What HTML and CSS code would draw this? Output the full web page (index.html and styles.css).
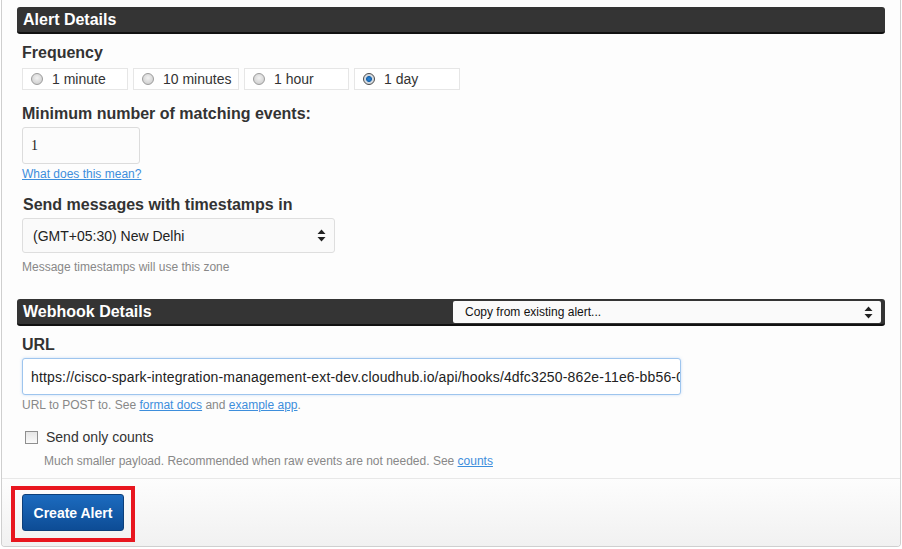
FILE: index.html
```html
<!DOCTYPE html>
<html>
<head>
<meta charset="utf-8">
<link rel="stylesheet" href="styles.css">
</head>
<body>
<div class="panel">
  <div class="body">
    <div class="bar"><span class="bar-title">Alert Details</span></div>
    <div class="field">
      <div class="label label-freq">Frequency</div>
      <div class="radios">
        <label class="radio"><span class="dot"></span>1 minute</label>
        <label class="radio"><span class="dot"></span>10 minutes</label>
        <label class="radio"><span class="dot"></span>1 hour</label>
        <label class="radio"><span class="dot on"></span>1 day</label>
      </div>
    </div>
    <div class="field">
      <div class="label label-min">Minimum number of matching events:</div>
      <div class="input small">1</div>
      <a class="link help-link">What does this mean?</a>
    </div>
    <div class="field">
      <div class="label label-tz">Send messages with timestamps in</div>
      <div class="select tz"><span>(GMT+05:30) New Delhi</span><svg class="arrows" width="9" height="13" viewBox="0 0 9 13"><path d="M4.5 0.5 L8.5 5 L0.5 5 Z M4.5 12.5 L8.5 8 L0.5 8 Z" fill="#222"/></svg></div>
      <div class="help help-tz">Message timestamps will use this zone</div>
    </div>

    <div class="bar bar-webhook">
      <span class="bar-title">Webhook Details</span>
      <div class="copy-select"><span>Copy from existing alert...</span><svg class="arrows" width="9" height="13" viewBox="0 0 9 13"><path d="M4.5 0.5 L8.5 5 L0.5 5 Z M4.5 12.5 L8.5 8 L0.5 8 Z" fill="#222"/></svg></div>
    </div>
    <div class="field">
      <div class="label label-url">URL</div>
      <div class="input url"><span class="url-text">https://cisco-spark-integration-management-ext-dev.cloudhub.io/api/hooks/4dfc3250-862e-11e6-bb56-0</span></div>
      <div class="help help-url">URL to POST to. See <a class="link">format docs</a> and <a class="link">example app</a>.</div>
    </div>
    <div class="check-row">
      <span class="box"></span><span class="check-label">Send only counts</span>
    </div>
    <div class="help check-help">Much smaller payload. Recommended when raw events are not needed. See <a class="link">counts</a></div>
  </div>
  <div class="footer">
    <div class="highlight"><button class="btn">Create Alert</button></div>
  </div>
</div>
</body>
</html>
```
FILE: styles.css
```css
html, body {
  margin: 0;
  padding: 0;
  background: #ffffff;
  font-family: "Liberation Sans", Arial, sans-serif;
  color: #333;
}
.panel {
  margin-left: 1px;
  width: 900px;
  height: 547px;
  border: 1px solid #cfcfcf;
  border-top: none;
  border-radius: 0 0 4px 4px;
  background: #fdfdfd;
  display: flex;
  flex-direction: column;
  box-sizing: border-box;
  overflow: hidden;
}
.body {
  padding: 7px 15px 0 15px;
  height: 479px;
  flex: none;
  box-sizing: border-box;
  border-bottom: 1px solid #e8e8e8;
}
.bar {
  height: 27px;
  background: #343434;
  border-radius: 3px;
  border-bottom: 2px solid #111;
  box-sizing: border-box;
  display: flex;
  align-items: center;
  padding-left: 6px;
  padding-right: 4px;
}
.bar-title {
  color: #fff;
  font-weight: bold;
  font-size: 16px;
  line-height: 20px;
  margin-top: 1px;
}
.field {
  padding-left: 5px;
}
.label {
  font-weight: bold;
  font-size: 16px;
  line-height: 20px;
  color: #333;
}
.label-freq { margin-top: 9px; }
.radios {
  display: flex;
  gap: 5px;
  margin-top: 5px;
}
.radio {
  width: 106px;
  height: 22px;
  border: 1px solid #e6e6e6;
  background: #fff;
  box-sizing: border-box;
  display: flex;
  align-items: center;
  font-size: 14px;
  color: #333;
  padding-left: 8px;
}
.radio:nth-child(3) { width: 105px; }
.dot {
  width: 12px;
  height: 12px;
  border-radius: 50%;
  border: 1px solid #9c9c9c;
  background: radial-gradient(circle at 50% 40%, #f2f2f2 0%, #d4d4d4 70%, #c2c2c2 100%);
  margin-right: 9px;
  box-sizing: border-box;
}
.dot.on {
  border-color: #4a4a4a;
  background: radial-gradient(circle at 50% 50%, #2a8ae0 0%, #1a62a8 38%, #cfd7df 45%, #e6e6e6 100%);
}
.label-min { margin-top: 14px; }
.input {
  border: 1px solid #dcdcdc;
  border-radius: 3px;
  background: #fff;
  box-sizing: border-box;
  font-size: 14px;
  color: #222;
  display: flex;
  align-items: center;
  padding-left: 8px;
  overflow: hidden;
  white-space: nowrap;
}
.input.small {
  width: 118px;
  height: 37px;
  margin-top: 3px;
  background: #fcfcfc;
  font-family: "Liberation Serif", serif;
  font-size: 14px;
}
.link {
  color: #3d8edc;
  text-decoration: underline;
}
.help-link {
  display: block;
  font-size: 12px;
  line-height: 14px;
  margin-top: 3px;
}
.label-tz { margin-top: 14px; margin-left: 1px; }
.select {
  height: 35px;
  border: 1px solid #dedede;
  border-radius: 3px;
  background: #fafafa;
  box-sizing: border-box;
  display: flex;
  align-items: center;
  justify-content: space-between;
  padding: 0 8px 0 10px;
  font-size: 14px;
  color: #222;
}
.select.tz {
  width: 313px;
  margin-top: 3px;
}
.help {
  font-size: 12px;
  line-height: 14px;
  color: #888;
}
.help-tz { margin-top: 7px; }
.bar-webhook {
  margin-top: 25px;
  justify-content: space-between;
}
.copy-select {
  width: 428px;
  height: 22px;
  background: #fafafa;
  border-radius: 2px;
  box-sizing: border-box;
  display: flex;
  align-items: center;
  justify-content: space-between;
  padding: 0 8px 0 12px;
  font-size: 12px;
  color: #111;
  margin-bottom: -1px;
}
.label-url { margin-top: 9px; }
.input.url {
  width: 659px;
  height: 37px;
  margin-top: 3px;
  border-color: #9ec5ee;
  box-shadow: 0 0 3px rgba(100, 160, 230, 0.35);
  font-size: 14px;
  padding-left: 8px;
}
.url-text {
  letter-spacing: 0.15px;
}
.help-url { margin-top: 3px; }
.check-row {
  display: flex;
  align-items: center;
  margin-top: 17px;
  padding-left: 8px;
  height: 16px;
}
.box {
  width: 13px;
  height: 13px;
  border: 1px solid #8f8f8f;
  box-sizing: border-box;
  background: linear-gradient(#e6e6e6, #fafafa);
  margin-right: 8px;
}
.check-label {
  font-size: 14px;
  color: #333;
}
.check-help {
  margin-top: 9px;
  padding-left: 27px;
}
.footer {
  flex: 1;
  background: linear-gradient(#fdfdfd, #f1f1f1);
  padding: 7px 0 0 9px;
}
.highlight {
  display: inline-block;
  border: 4px solid #e8161f;
  padding: 4px 7px 7px 7px;
}
.btn {
  width: 102px;
  height: 37px;
  border: 1px solid #0c3f7a;
  border-radius: 3px;
  background: linear-gradient(#1c6bbf, #0d4c95);
  color: #fff;
  font-family: "Liberation Sans", Arial, sans-serif;
  font-weight: bold;
  font-size: 14px;
  display: block;
  padding: 0;
}
```
